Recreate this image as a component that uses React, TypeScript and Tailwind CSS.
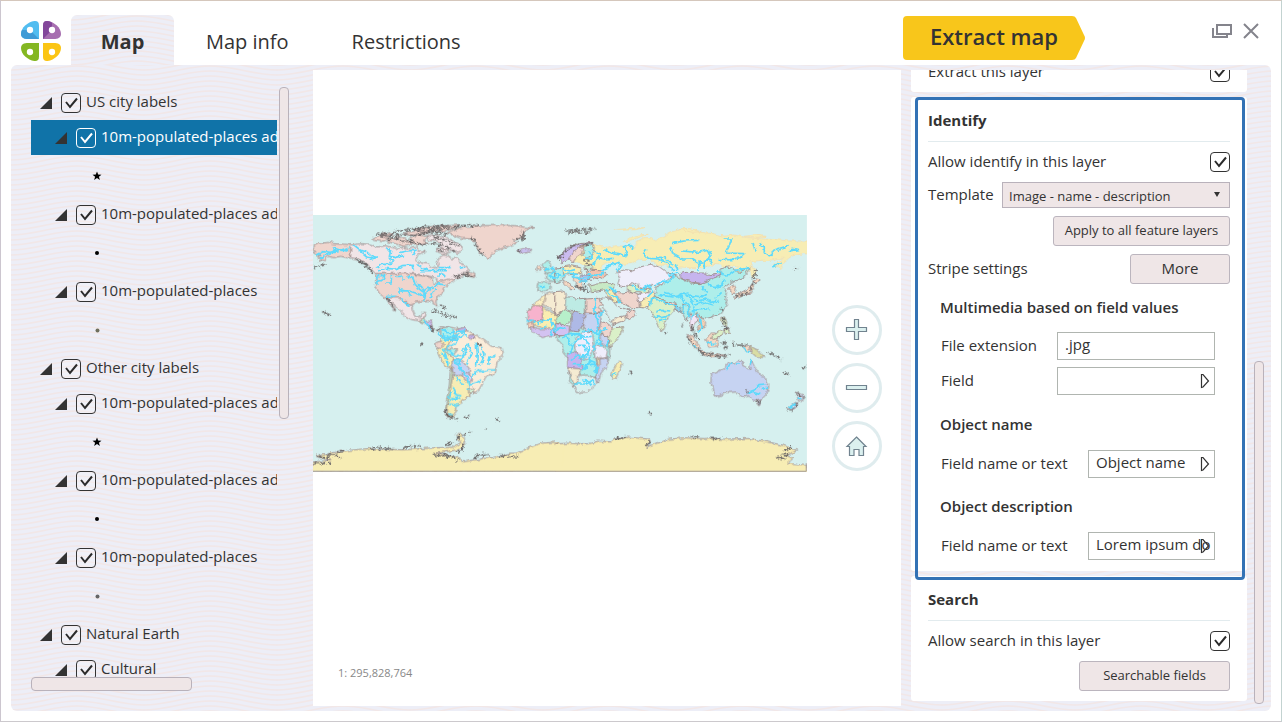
import React, { useState } from 'react';

type Shape = [fill: string, d: string];

interface TreeNode {
  id: string;
  label: string;
  level: 1 | 2;
  symbol?: 'star' | 'dot' | 'olive' | 'gray';
}

const nodes: TreeNode[] = [
  { id: 'us', label: 'US city labels', level: 1 },
  { id: 'us-adm0', label: '10m-populated-places adm0', level: 2, symbol: 'star' },
  { id: 'us-adm1', label: '10m-populated-places adm1', level: 2, symbol: 'dot' },
  { id: 'us-all', label: '10m-populated-places', level: 2, symbol: 'olive' },
  { id: 'other', label: 'Other city labels', level: 1 },
  { id: 'other-adm0', label: '10m-populated-places adm0', level: 2, symbol: 'star' },
  { id: 'other-adm1', label: '10m-populated-places adm1', level: 2, symbol: 'dot' },
  { id: 'other-all', label: '10m-populated-places', level: 2, symbol: 'gray' },
  { id: 'earth', label: 'Natural Earth', level: 1 },
  { id: 'cultural', label: 'Cultural', level: 2 },
];

// Map shapes are stored in quadrants: NW, NE, SW, SE
const northWest: Shape[] = [
  ['#efd5cd', 'M9 122l14-6 30-4 18 4 51 3v41l-30-6-22 4-14-4-10 8-18 10 8-12-14-4 8-6-14-2-7-6 12-4-10-4z'],
  ['#f1e5e7', 'M122 120l34-4 24 2 22 8 26-4 30 8 24-2 20 4 16-6 10 10 18 4-22 8-6 16 10 10 22 2 18 10 12 6 6-8-4-12 6-14 12-8 18 4 10 8 14-4 8 14 22 14 8 14-28 4 10 6-14 10-22 4-18 8-24 4-5-19-65-11H197l-20-20-12-14-20-10-23-4z'],
  ['#efd5cd', 'M197 206h103l65 12 5 19 24-9 30-8 12 2-14 12-18 14-6 16-16 10-4 14 3 18-8-6-6-14-28 2-26 4-6 13-14-12-20-10h-40l-24-16-12-22z'],
  ['#f1e5e7', 'M229 279h38l18 12 21 13 1 14 8 17h16l6-12 13-1-4 12-12 6-1 8-28-4-24-14-14-18-20-18 10 22-8-6z'],
  ['#c6efcf', 'M331 339l12 1-1 14-11-3z'],
  ['#cbbcf0', 'M343 350l20-2 4 18 4 12-10-8-14-16z'],
  ['#efd5cd', 'M411 84l26-12 30-8 46-2 60-1 44 1 28 5 30 1-30 8-6 20-28 10 10 8-26 10-18 6-18 8-12 8-8 14-20-8-16-20-4-16-12-14-34-2z'],
  ['#efd5cd', 'M190 98l28-6 22 8-24 10-26-4zM212 88l30-4 10 6-22 4zM236 100l44-4 10 8 22 14-30 6-28-8-20-6zM300 98l24-8 28 4-12 12 14 10-30 4-20-8zM282 84l50-8 34 6-30 6-40 2zM318 72l56-8 76-4-28 14-46 6-40-2z'],
  ['#f1e5e7', 'M350 92l30-4 34 12 26 12 18 14-12 20-18-10-24-2-16-8 8-14-40-6zM380 130l26 2 14 8-18 8-20-8z'],
  ['#efd5cd', 'M462 206l20-3 14 6-2 8-18-3z'],
  ['#c9c0ef', 'M620 136l20-5 22 3-6 9-22 3z'],
  ['#f5d9c4', 'M678 186l8-6 8 5-4 9-10 2z'],
  ['#aeeeea', 'M700 178l12-12 8 8 6 20 12 10-34 2 8-12-12-6z'],
  ['#aeeeea', 'M683 232l36 0 2 20-20 8-20-4zM710 206l30-6 10-8v34l-26 4-14-10z'],
  ['#f5ebd2', 'M710 268l14-6 26-2v74l-48-34-20 2 6-16z'],
  ['#faeec0', 'M709 266l-20 18-24 18-14 22 16 0 16-18 18-12z'],
  ['#f7b3cd', 'M652 322l18-20h28v46h-30l-16-4z'],
  ['#faeeb0', 'M698 306l52 32v20l-20 14-20 6-12-14-28-4 0-12h28z'],
  ['#d3c2f1', 'M658 370l24-2 16 10 18-10 20 6 14 4v14l-34 0-18 6-20-10z'],
  ['#f8cdb8', 'M652 352l16 2 4 14-16 2z'],
];

const northEast: Shape[] = [
  ['#f7edb4', 'M116 118l22 6 20 6 24-8 30 2 30 4 4-18 20-12 24 0 12 10 18-12 30-16 34-8 36 2 18 8 36 4 34 8 28-4 42 8 46 4 40 2 34 4h88v18l8 6 0 10-24 6-26-2-30 6-14 8-14 18-12 16-6-12 20-22-18 0-24 6-26 0-34 4 4 20-20 18-22 10-12 6 4-22 10-18-14-4-24 8-14-8-24-2-20 10-50 0-26-2-22 2-30-8-16 2-24-18-36-2-20 14-36 2-20-6-24 2-12 14 6 22-24-8-30-22-24-6-12-14-8-16 4-18z'],
  ['#f7edb4', 'M208 110l20-14 24-6 28-2-24 8-30 12zM370 72l30-2 42 10-30 2zM568 94l30-4 36 4-26 6zM178 74l60-4 30-2-26 6-50 2zM586 182l12 6 4 22-10 8-4-18zM652 182l22-14 8 4-20 14z'],
  ['#efeefb', 'M186 202l24-8 24 4 22-12 30-8 28 8 24 18 22 4-10 16-16 8-10 8-30-2-22 10-18-2-8-14-20 6-14 8-24-6 6-20z'],
  ['#c6b4ee', 'M370 206l26-4 26 2 30 0 14 8 32-6-4 10-26 10-22 10-34-4-30-10z'],
  ['#aeeeea', 'M304 246l20-8 16-18 20-10 16 10 28 14 32 2 24-10 34-12 2-22 22-6 18 4 14 12 38-16-24 32-34 14-24 16 10 10-4 22 6 20-22 26-24 10-16 4-22-6-24 4-14-10-28-10-30-8-28-18-10-20z'],
  ['#daf0c8', 'M216 240l30 2 18 8 24 0-14 14-22-4-18 2-20-8z'],
  ['#efd5cd', 'M178 262l24 2 28-4 18 6 4 22 2 20-20 0-26-10-22-18z'],
  ['#efeefb', 'M246 270l30-10 18 2-10 14-20 14-16-4z'],
  ['#f7edb4', 'M254 290l22-12 14-16 10 8-10 22-8 16-26-4z'],
  ['#daf0c8', 'M278 310l18-34 18 2 24 14 20 6 4 14-14 14-14 22-8 20-6 12-8-10-12-30-10-18z'],
  ['#efd5cd', 'M328 290l24 0 14 8-14 2-22-4z'],
  ['#8fd6f2', 'M362 306l12-2 4 14-12 4z'],
  ['#aeeeea', 'M386 296l14 10 6 18-12 22-10-18z'],
  ['#f1e5f5', 'M406 328l14 0 12 16-14 12-8 20-6-14z'],
  ['#f3d0b4', 'M424 324l18 14 10 18-8 18-14-2 8-14-12-20z'],
  ['#c8e9c5', 'M102 240l26-6 32-2 18 6-4 14-34 4-30 4z'],
  ['#f3c3ae', 'M94 200l24-4 28 2 10 12-20 12-22-4-22-6z'],
  ['#c9e9d2', 'M90 178l22 0 6 14-26 2z'],
  ['#aeeeea', 'M84 128l20-12 14 10-4 22-18 12-16-8 8-12z'],
  ['#efd5cd', 'M40 148l24-16 22-8-6 22-20 14-8 14-10-10z'],
  ['#cbbcf0', 'M8 152l16-8 20-20 30-8 40-4-36 12-26 22-12 16-20 12z'],
  ['#f7edb4', 'M22 186l26-4 34 8-6 16-40 4-14-10z'],
  ['#aeeeea', 'M0 192l24-2 4 24-12 16-16 4z'],
  ['#b3c2ea', 'M76 210l28 0 4 16-26 4z'],
  ['#f5d9c4', 'M24 226l16 8 20 20-14 0-16-16zM54 216l20 4 10 18-6 18-12-14z'],
  ['#f5ebd2', 'M0 260l24-2 10 4 0 28-6 30-28 12z'],
  ['#bdebe4', 'M32 276l18 0 12 6 30-2v42l-10 6-52-18z'],
  ['#efd5cd', 'M92 282l38-2 10 18-6 6 6 20H92z'],
  ['#b7efca', 'M4 334l26-18 22 6-4 24-20 16-24-8z'],
  ['#aeb9e6', 'M54 316l36 12-4 28-14 22-28-4 4-22z'],
  ['#d3c2f1', 'M0 356l20 2 24 6-2 24-18 4-24 0z'],
  ['#c6d3f2', 'M90 326l50 0-4 40-12 16-34-6-4-14z'],
  ['#efd5cd', 'M138 350l18 4 20 16 16 6-22 20-26-2-12-20z'],
  ['#daf0c8', 'M176 368l30-2-12 26-30 36-4-30z'],
  ['#d8f0ef', 'M134 284l14-6 22 6 16 20 26 8 28 6-12 18-38 8-16 18-14-24z'],
  ['#f5ebd2', 'M170 350l18-14 28-4-8 16-34 10z'],
  ['#efd5cd', 'M212 336l6-16 20-4 4 10-18 18z'],
  ['#faeeb0', 'M150 256l22-2 14 20 10 16-12 4-24-18z'],
  ['#f5d9c4', 'M524 244l10-6 10 24-12 4-8-12zM540 272l16-8 22-12 14-16 6 6-14 26-22 2-20 10zM592 232l14-10 10 6-14 8z'],
  ['#daf0c8', 'M498 340l10-2 8 14-2 14-12-10zM506 372l14-2 4 14-12 4zM466 400l30-24 12-2-8 18-26 12z'],
];

const southWest: Shape[] = [
  ['#faedda', 'M396-42l50 8 30 8 20 10 26 16 20 18 34 6 4 16-18 22-6 36-28 12-20 38-18 14-24-18 6-24-20-18-28-42-26-6-8-22 8-50z'],
  ['#f7edb4', 'M396-34l34 6 10 20-20 12-10 22 14 16 6 20-2 26-24-12-16-26-8-20 12-14z'],
  ['#aeeeea', 'M394-36l24-4 12 12 14 14-22 14-18-4-12-14zM404 30l20-6 20 4-14 20-14-4z'],
  ['#efd5cd', 'M378 8l14-4 12 10-14 14-12-8z'],
  ['#c6d3f2', 'M426 60l22-2 24 20 12 22-22 12-22-2-12-16z'],
  ['#dcd1f5', 'M458 96l20 4 10 22-16 6-14-14z'],
  ['#f7edb4', 'M428 108l26-2 22 22 4 40-24 12-2 10-18 12 4 14-12 18-14-2-4-34 6-40z'],
  ['#c8e9c5', 'M422 84l6 14-6 52-8 40-4 36 4 10-8-10 4-46 8-44z'],
  ['#d5edd0', 'M474 144l20 2-2 12-16 2z'],
  ['#c6b4ee', 'M477-14l16-2 2 12-16 2zM442-32l22-6 4 12-18 4z'],
  ['#f7edb4', 'M9 366l54-4-44-12 30-8 60-10 70-6 100 4 90-6 60-2 24-14-14-20 10-10 14 16 0 22-20 14-66 10 66 10 14 16 80-12 30-4 30-10 22 0 30-14 46-16 50-4v85H9z'],
];

const southEast: Shape[] = [
  ['#c6d3f2', 'M470 104l20-10 20-10 10-16 16 4 12-10 16 0-2 14 22 12 6-28 10 20 10 20 20 14 12 22-6 26-14 14-26 6-14-14-20 4-16-16-32 2-22 10-14 0-2-20-8-20z'],
  ['#c6d3f2', 'M606 180l12 0 0 10-8 6z'],
  ['#d5e0f5', 'M724 156l10 8 14 4-4 14-14-2zM698 208l20-18 10-6 0 12-18 14z'],
  ['#f7edb4', 'M196 60l4 14-10 26-8 16-12-2 2-18 12-24z'],
  ['#aeeeea', 'M0-24l44-6 60-8 58 4 4 20-2 34 0 40-40 20 2 24-28 34-36 4-18-14-4-70-16-20 2-20-20-22z'],
  ['#efeefb', 'M60-2l30-26 22 4 6 40-16 40-24-2-18-24z'],
  ['#c6b4ee', 'M38 40l30-4 10 20 6 32-46-4z'],
  ['#f5ebd2', 'M38 84l32 2 6 6-8 40-12 0z'],
  ['#d8f0ef', 'M68 106l28 0 26 8 4 16-28 26-34 2-8-26 12 0z'],
  ['#efeefb', 'M118 22l20-8 20 16-4 24-34 2z'],
  ['#c6d3f2', 'M124 60l36-8-4 26-18 22-8 30-8-18 10-26zM134-16l28 2-2 34-22-10z'],
  ['#f0e0b6', 'M126 52l8-2 2 26-8-4z'],
  ['#f5d9c4', 'M396-14l20 8 22 32-8 4-22-26zM436 34l40 8 40 4-40 4-36-6zM452-4l22-18 18 6-6 34-24 4zM564 16l18 2 4 20-14-8z'],
  ['#d9dda4', 'M584 18l24 12 22 22-24 0-16-14z'],
  ['#f7edb4', 'M0 312l40-2 60 2 30-8 36 2 10-8 46-6 62 6-8 26 24-12 40-14 50-4 60 2 14-2 40 4 76-2 60 10 50 12 38 14-34 14 20 10-16 14 70 10 8 26H0z'],
];

const rivers: [x: number, y: number, d: string][] = [
  [0, 0, 'M18 152l20-12 24 2 20-8 28 4 10-10M30 158l30-14 26-4M68 128l24 8 20-8M132 120l20 16 20 4 24 22-18 4M146 136l24 20 26 4 10-8M228 128l14 10-4 16 18 4 26-6M270 142l20-4 28-2-10 14M198 190l16-12 26 0 8-12-12-8M204 198l20-8 32 2 20-10 30-2 4 16M320 178l30 18 26 2M330 197h78M386 188l36 0M446 190l20-4M196 232l20-6 8-14-20 0-8 10M204 212v24M244 210v24h-16M254 214l20 0 10 10M290 210l20 12 6 18 18 4 8 14 0 30M268 270l-2-20 24 6 12 16M268 258l30 0 30 10 16 12M320 246l18 14 14-10 20 0 10-14 24 4M344 286l2-20 20-20M360 280l6-16 16-10M384 214l8-8 14 6M230 274l30 0M274 280l10 14 14 8M338 344l20 20 6 12M396 374l20 10 34-6 10 12-20 14-34 2-6-22M430 370l4 30M706 196l20-10 10 12-16 14M716 212l24 8 10-8M686 244l20 2M650 346l20 0 14 10 20-12 18 2 10 18 4 20M690 374l18-10M720 390l12-18'],
  [735, 0, 'M116 136l20 12-14 16-6 16M148 134l14 8 30 4 20 10 4-10-8-22 22-2 4 8M140 200l16-14 22-8 14-6 6 10-12 18M132 158l20 4 24-2M276 130l-10 16 14 14 32 2 26 14 12 18 10 4M346 122l8 26 26 14 30 0 22 14 0 20M300 156l30 2 14 14 18 8 4 16M380 138l50 4 30-6 8 16-20 16 0 24M352 116l36-8 46-2M506 102l24 0-8 22-10 20 54 2-10 12-26 6-40 0M432 172l34-6 6 10M594 114l6 26M614 112l14 14 0 20 16 6 18-18 40-12M652 186l28-12M704 138l24-4-14-4-10 8M90 160l22 0-8-18M20 190l24 8 16-4M0 206l22 6 20-8 24 4M96 206l30 6 22-8M50 214l24 6 34-4-10 12-30 0M150 250l16 20 18 8 12 16M160 246l26 16M234 240l14 14 24 0M264 250l18-10 10 20-14 16M302 240l22-12 16 2 18-18M370 204l-30 8M310 268l40 8 30-4 10 20M330 262l34 14 20-12 30 10M286 306l4-28 24 8 30 12 24 8M304 320l22-4 20 2M300 334l20 4 24-6M312 350l22-8M380 280l20 20 2 40M392 270l22 20 4 30-10 20M400 266l26 22 28-6 16 10 20-4M420 300l26-8 30 8M410 320l30-10 24 4M440 244l20 20-16 12-32-4M456 232l20 16 24-6 8-20M486 196l20 14 20-2 16-12 42-8M500 262l-20 20M426 330l10 10 6 30-14 12M390 300l-6 24M120 280l4 16 -8 20 10 20 4 24-8 30M148 316l-14 20M154 370l-20 10-10 34M84 380l26-6 20 16M50 392l20-6 20 10 20-2M0 376l14-8 20 4'],
  [0, 405, 'M384-20l20 20 18-10 22 4-8 18-26 8M400-12l30 6 30-22 10 18M410 26l24 20 30 0-6-16 14-14M392 38l20 20 2 20M400 26l10 26M466 20l4 22-24 20-16-2M472 12l14 26-16 34M498 8l4 30-2 40M510 40l10 16-12 22M514 20l8 20-6 30M558 46l-18 4-4 24M556 90l-20 0-14 4-26 0-14 24M430 60l20 20 20 30M444 58l6 34 12 0M438 110l10 16 14 6M470 104l6 32 24-8 14-8M482 148l-12-4M430 142l8 22 16 4M412 170l40 8M416 184l28-14M418 192l28 4M424 152l-4 14M416 222l12 2'],
  [735, 405, 'M22-6l20-14 24 2 14 8-16 12M64 0l20-6 20 20-8 30-24 10M70 16l20 0 6 22M48 62l20-18 16 10 14-8M52 74l20 0 24 4 10-12-4-22M80 90l16-12 18-6 12 6-6 18M96 84l6-24 20 8M58 132l36 0 16-10 8 12M84 120l14 4 12 14M114 30l10-20 14 4-6-20M130 80l-6 24M156 2l4 18M36-12l8 24 10 8-10 24M54 12l16-16M170 104l14-2M514 90l10-16 8-2M540 72l12 0M590 60l-4 14M632 132l-20 2-14 16-16 6M636 142l-20 4M616 164l-20-6-16 0M704 202l20-12M728 170l14 8M416 12l10 12M456 12l12-6 10 6M566 20l16 18'],
];

// Broken, rocky coastlines and small islands
const coasts: [x: number, y: number, d: string][] = [
  [0, 0, 'M196 90l26-6 20 4 18-10 36-4 30-6 40-4 50-2M210 92l40 2 40-6 30 4 40-14 40-4M230 104l30-4 20 8 30 2M310 74l50-2 40-4 44 2M330 84l60-2 20 6M370 96l40 10 20 10 24 8M360 116l40 4 20 12 16 8M300 106l20 10 30 2M384 132l24 12M430 66l44-6 30 2M482 98l10 6 6 18 8 4 6 20 10 2M640 78l-6 20-14 8M644 84l-6 24M142 162l10 12 14 2 10 14 16 16M150 168l22 18M9 188l40-10M228 276l18 22 8 18M362 320l16-2 14 8 20 2M402 336l26-2 10 4M430 214l20 0 14-8 14 0M464 210l30 4M360 362l10 14 20 0M390 300l16 10M40 322l12 4 10 6M742 154l8 8M620 136l14 4'],
  [735, 0, 'M32 78l20-4 20 2 20-4 30 0M40 84l34-4 30 2M8 156l16-8 10-14 20-12 30-4 30 0M12 162l10-6M88 236l8 20M74 248l30 14M500 310l2 10M504 338l6 20 8 18M506 370l14 0M408 360l8 22 18 22M544 274l30-8 14-16 10-22M590 222l10-12 4-20M382 358l2 12M326 380l8 6M718 190l10 2M62 240l14 10M86 164l16 0M92 174l10 4'],
  [0, 405, 'M406 206l4 14 16 14 16 4M404 212l8 16 20 8M410 220l20 16M462 232l16-2M556 236l14 8M524 268l4 0M500 12l16 4M330 12l8 2M24 348l20 6 14-2M50 344l30 2 14 6M10 370l50 0M80 336l22-2M176 328l26-4 50 4M282 322l20-4 30 0M368 344l30 4M400 346l30 6 16 8M436 300l16-12 30-10M406 316l24-8M460 310l-4 20-14 8M566 348l60 2M490 352l22-8 24 0'],
  [735, 405, 'M396-10l22 28 20 16M436 38l30 6 40 6 20-6M500 14l10-8 4 16-10 4M532 6l4 12M546 16l30 0M640 38l20 8 20 12M686 98l16 8M744 84l10-4M222 98l10 0M280 218l10 4M724 156l10 10 14 6M698 208l14 2 16-24M606 180l10 14M574 152l8 8M664 352l30 6M680 344l26 0M690 330l20-8M272 318l14-14M180 296l40-2M470 296l30 0M410 290l20 2'],
];

function Waves() {
  return (
    <svg className="absolute inset-0 h-full w-full" aria-hidden="true">
      <defs>
        <pattern id="waves" width="133" height="5" patternUnits="userSpaceOnUse">
          <rect width="133" height="5" fill="#edeef7" />
          {[-10, -5, 0, 5, 10].map(y => (
            <path
              key={y}
              d={`M0 ${y + 5}C24 ${y + 5} 42 ${y - 4} 66 ${y - 4}S109 ${y + 5} 133 ${y + 5}`}
              fill="none"
              stroke="#f2e7e7"
              strokeWidth="1.500"
            />
          ))}
        </pattern>
      </defs>
      <rect width="100%" height="100%" fill="url(#waves)" />
    </svg>
  );
}

function Logo() {
  const petal = 'M117 117V76C117 66 112 62 103 63C83 66 63 83 63 102C63 113 72 117 85 117z';
  return (
    <svg viewBox="60 60 126 126" className="h-[42px] w-[42px]" aria-hidden="true">
      <path d={petal} fill="#52bdf0" />
      <path d="M117 117H85C72 117 63 113 63 102q0-7 3-12h24z" fill="#3f9bd6" />
      <g transform="matrix(-1 0 0 1 246 0)">
        <path d={petal} fill="#a76fb0" />
        <path d="M117 117V76C117 66 112 62 103 63q-7 1-13 5v22z" fill="#83479a" />
      </g>
      <path d={petal} fill="#84b722" transform="matrix(1 0 0 -1 0 246)" />
      <path d={petal} fill="#fbc514" transform="rotate(180 123 123)" />
      <g fill="#fff">
        <circle cx="90" cy="90" r="9.500" />
        <circle cx="156" cy="90" r="9.500" />
        <circle cx="90" cy="156" r="9.500" />
        <circle cx="156" cy="156" r="9.500" />
      </g>
    </svg>
  );
}

function WorldMap() {
  const quadrants: [number, number, Shape[]][] = [
    [0, 405, southWest],
    [735, 405, southEast],
    [0, 0, northWest],
    [735, 0, northEast],
  ];

  return (
    <svg viewBox="9 30 1482 771" className="block w-full" role="img" aria-label="World map">
      <defs>
        <filter id="ragged" x="0" y="0" width="1500" height="810" filterUnits="userSpaceOnUse">
          <feTurbulence type="fractalNoise" baseFrequency="0.07" numOctaves="3" seed="4" />
          <feDisplacementMap in="SourceGraphic" scale="14" xChannelSelector="R" yChannelSelector="G" />
        </filter>
        <filter id="rocky" x="0" y="0" width="1500" height="810" filterUnits="userSpaceOnUse">
          <feTurbulence type="fractalNoise" baseFrequency="0.12" numOctaves="3" seed="9" />
          <feDisplacementMap in="SourceGraphic" scale="18" xChannelSelector="R" yChannelSelector="G" />
        </filter>
      </defs>
      <rect x="9" y="30" width="1482" height="771" fill="#d6f0ef" />
      <g filter="url(#ragged)">
        {quadrants.map(([x, y, shapes]) => (
          <g key={`${x}-${y}`} transform={`translate(${x} ${y})`} stroke="#988383" strokeWidth="2.500" strokeLinejoin="round">
            {shapes.map(([fill, d], i) => (
              <path key={i} d={d} fill={fill} stroke={y === 0 && x > 0 && i < 2 ? '#f3dfae' : undefined} />
            ))}
          </g>
        ))}
        <path d="M726 722h34v76h-34z" fill="#f7edb4" />
      </g>
      <path d="M9 782h1479v17H9z" fill="#f7edb4" />
      <g filter="url(#rocky)" fill="none" stroke="#696565" strokeWidth="5" strokeDasharray="22 4 12 6">
        {coasts.map(([x, y, d]) => <path key={d} d={d} transform={`translate(${x} ${y})`} />)}
      </g>
      <g filter="url(#ragged)" fill="none" stroke="#5cdafc" strokeWidth="5" strokeLinejoin="round">
        {rivers.map(([x, y, d]) => <path key={d} d={d} transform={`translate(${x} ${y})`} />)}
      </g>
      <path d="M9 799h1480v-24" fill="none" stroke="#a39a97" strokeWidth="3" />
    </svg>
  );
}

function Checkbox({ id, light }: { id: string, light?: boolean }) {
  return (
    <span className="relative block h-5 w-5 shrink-0">
      <input
        id={id}
        type="checkbox"
        defaultChecked
        className={`peer block h-5 w-5 appearance-none rounded border ${light ? 'border-white' : 'border-[#333] bg-white/20'}`}
      />
      <svg viewBox="0 0 20 20" className="pointer-events-none absolute inset-0 hidden h-5 w-5 peer-checked:block" aria-hidden="true">
        <path d="M5 9l4 5L16 5.500" fill="none" stroke={light ? '#fff' : '#2b2b2b'} strokeWidth="2" />
      </svg>
    </span>
  );
}

function SymbolRow({ symbol }: { symbol: NonNullable<TreeNode['symbol']> }) {
  return (
    <div className="flex h-[42px] items-center pl-[61px]">
      <svg viewBox="0 0 10 10" className="h-2.5 w-2.5" aria-hidden="true">
        {symbol === 'star' && <path d="M5 .5l1.200 3.100 3.300.1-2.600 2 1 3.300L5 7.100 2.100 9l1-3.300-2.600-2 3.300-.1z" fill="#000" />}
        {symbol === 'dot' && <circle cx="5" cy="5" r="2" fill="#000" />}
        {symbol === 'olive' && <circle cx="5.500" cy="5.500" r="2" fill="#6f6f5c" />}
        {symbol === 'gray' && <circle cx="5.500" cy="5.500" r="2" fill="#666" />}
      </svg>
    </div>
  );
}

function LayerTree() {
  const [selected, setSelected] = useState('us-adm0');

  return (
    <aside className="relative flex w-[302px] shrink-0 flex-col py-5 pl-5">
      <div className="flex min-h-0 flex-1 gap-0.5">
        <div className="w-[246px] overflow-hidden">
          {nodes.map(node => {
            const active = node.id === selected;
            return (
              <div key={node.id}>
                <div
                  onClick={() => setSelected(node.id)}
                  className={`flex h-[35px] items-center ${node.level === 2 ? 'pl-6' : 'pl-[9px]'} ${active ? 'bg-[#1073a8] text-white' : ''}`}
                >
                  <button aria-label={`Collapse ${node.label}`} className="mr-[9px] shrink-0">
                    <svg viewBox="0 0 12 12" className="h-3 w-3" aria-hidden="true"><path d="M12 0v12H0z" fill="#333" /></svg>
                  </button>
                  <Checkbox id={node.id} light={active} />
                  <label htmlFor={node.id} className="pb-1 pl-[5px] whitespace-nowrap">{node.label}</label>
                </div>
                {node.symbol && <SymbolRow symbol={node.symbol} />}
              </div>
            );
          })}
        </div>
        <div className="mt-0.5 h-[56%] w-2.5 rounded-sm border border-[#b9b2bb] bg-[#efe6e7]" />
      </div>
      <div className="h-3.5 w-[161px] rounded-sm border border-[#b9b2bb] bg-[#efe6e7]" />
    </aside>
  );
}

function MapButton({ label, children }: { label: string, children: React.ReactNode }) {
  return (
    <button aria-label={label} className="flex h-[50px] w-[50px] items-center justify-center rounded-full border-3 border-[#dfecee] bg-white">
      <svg viewBox="0 0 24 24" className="h-6 w-6" fill="#dbf0ef" stroke="#71838f" strokeWidth="1.200" aria-hidden="true">{children}</svg>
    </button>
  );
}

function MapView() {
  return (
    <main className="relative my-[5px] flex min-w-0 flex-1 flex-col bg-white pt-[145px]">
      <div className="w-[84%]">
        <WorldMap />
      </div>
      <p className="mt-auto pb-[23px] pl-[25px] text-[11px] leading-5 text-[#888]">1: 295,828,764</p>
      <div className="absolute top-1/2 right-[19px] flex -translate-y-1/2 flex-col gap-2">
        <MapButton label="Zoom in"><path d="M9.500 1.500h4v8h8v4h-8v8h-4v-8h-8v-4h8z" /></MapButton>
        <MapButton label="Zoom out"><path d="M1.500 9.500h20v4h-20z" /></MapButton>
        <MapButton label="Home"><path d="M11.500 3l9.500 9.500h-2.500v9h-4.500v-6h-5v6H4.500v-9H2z" /></MapButton>
      </div>
    </main>
  );
}

function PanelTitle({ children }: { children: React.ReactNode }) {
  return <h2 className="flex h-[45px] items-center border-b border-[#e2ebee] pt-0.5 font-bold">{children}</h2>;
}

function CheckRow({ id, label }: { id: string, label: string }) {
  return (
    <div className="flex h-10 items-center justify-between">
      <label htmlFor={id} className="pb-0.5">{label}</label>
      <Checkbox id={id} />
    </div>
  );
}

function FieldRow({ id, label, value, picker, wide }: { id: string, label: string, value: string, picker?: boolean, wide?: boolean }) {
  return (
    <div className="flex h-7 items-center justify-between pr-[15px] pl-[13px]">
      <label htmlFor={id} className="pb-0.5 whitespace-nowrap">{label}</label>
      <div className={`relative h-7 ${wide ? 'w-[158px]' : 'w-[127px]'}`}>
        <input id={id} defaultValue={value} className="block h-7 w-full border border-[#b0b5b0] bg-white pr-[3px] pb-1 pl-[7px]" />
        {picker && (
          <button aria-label={`Choose ${label}`} className="absolute top-1.5 right-[5px]">
            <svg viewBox="0 0 10 16" className="block h-4 w-2.5" aria-hidden="true">
              <path d="M1.500 1.500v13l1.500-.5 5.500-6L3 1.500z" fill="none" stroke="#333" strokeWidth="1.200" />
            </svg>
          </button>
        )}
      </div>
    </div>
  );
}

const buttonStyle = 'h-[30px] rounded-[3px] border border-[#bbb5be] bg-[#efe6e7] pb-0.5';

function Settings() {
  return (
    <div className="relative my-[5px] flex w-[370px] shrink-0 overflow-hidden pr-[7px] pl-2.5">
      <div className="flex w-[336px] flex-col justify-end gap-[5px] pb-[5px]">
        <section className="rounded-[3px] bg-white px-[17px]">
          <CheckRow id="extract" label="Extract this layer" />
        </section>

        <section className="relative rounded-[3px] bg-white px-[17px] pb-[11px]">
          <div className="pointer-events-none absolute top-0 right-0.5 -bottom-[9px] left-1 z-10 rounded border-3 border-[#3372b5]" />
          <PanelTitle>Identify</PanelTitle>
          <CheckRow id="identify" label="Allow identify in this layer" />
          <div className="flex h-[26px] items-center justify-between">
            <label htmlFor="template" className="pb-0.5">Template</label>
            <div className="relative">
              <select id="template" className="block h-[26px] w-[228px] appearance-none border border-[#b9b2bb] bg-[#efe6e7] pt-0.5 pl-1.5 text-[13px]">
                <option>Image - name - description</option>
              </select>
              <svg viewBox="0 0 6 5" className="pointer-events-none absolute top-2.5 right-2.5 h-[5px] w-1.5" aria-hidden="true">
                <path d="M0 0h6L3 5z" fill="#333" />
              </svg>
            </div>
          </div>
          <div className="mt-2 flex justify-end">
            <button className={`${buttonStyle} w-[177px] text-[13px]`}>Apply to all feature layers</button>
          </div>
          <div className="mt-2 flex items-center justify-between">
            <span className="pb-0.5">Stripe settings</span>
            <button className={`${buttonStyle} w-[100px]`}>More</button>
          </div>
          <h3 className="flex h-12 items-center pb-0.5 pl-3 font-semibold">Multimedia based on field values</h3>
          <FieldRow id="ext" label="File extension" value=".jpg" wide />
          <div className="mt-[7px]">
            <FieldRow id="field" label="Field" value="" picker wide />
          </div>
          <h3 className="flex h-[55px] items-center pt-0.5 pl-3 font-semibold">Object name</h3>
          <FieldRow id="name" label="Field name or text" value="Object name" picker />
          <h3 className="flex h-[54px] items-center pt-0.5 pl-3 font-semibold">Object description</h3>
          <FieldRow id="desc" label="Field name or text" value="Lorem ipsum dolor" picker />
        </section>

        <section className="rounded-[3px] bg-white px-[17px] pb-2.5">
          <PanelTitle>Search</PanelTitle>
          <CheckRow id="search" label="Allow search in this layer" />
          <div className="flex justify-end">
            <button className={`${buttonStyle} w-[151px] text-[13px]`}>Searchable fields</button>
          </div>
        </section>
      </div>
      <div className="mb-0.5 ml-auto h-[54%] w-2.5 self-end rounded-sm border border-[#b9b2bb] bg-[#efe6e7]" />
    </div>
  );
}

export default function App() {
  return (
    <div className="flex h-screen flex-col bg-white pb-[3px] font-['Open_Sans',sans-serif] text-[15px] leading-5 text-[#333]">
      <div className="flex min-h-0 flex-1 flex-col border border-t-[#d5c7bc] border-r-[#c3d3d1] border-b-[#ccc9cd] border-l-[#ccc6cf] px-2.5 pb-2.5">
        <header className="flex h-16 shrink-0">
          <div className="mt-[19px] ml-[9px] w-[51px]">
            <Logo />
          </div>
          <nav className="flex items-end text-xl">
            <a href="#map" className="relative flex h-[50px] w-[103px] items-center justify-center overflow-hidden rounded-t-md pt-1 font-bold">
              <Waves />
              <span className="relative">Map</span>
            </a>
            <a href="#info" className="flex h-[50px] items-center pt-1 pl-8">Map info</a>
            <a href="#restrictions" className="flex h-[50px] items-center pt-1 pl-[63px]">Restrictions</a>
          </nav>
          <button className="relative mt-[15px] mr-[126px] ml-auto h-11 w-[182px]">
            <svg viewBox="0 0 182 44" className="absolute inset-0 h-full w-full" aria-hidden="true">
              <path d="M4 0h165q3 0 4 2l8 17q2 3 0 6l-8 17q-1 2-4 2H4q-4 0-4-4V4q0-4 4-4z" fill="#f8c61b" />
            </svg>
            <span className="relative block pb-1 text-[22px] font-semibold">Extract map</span>
          </button>
          <div className="flex items-start gap-2.5 pt-[22px] pr-3">
            <button aria-label="Restore window">
              <svg viewBox="0 0 22 16" className="h-4 w-[22px]" fill="none" stroke="#84848c" strokeWidth="2" aria-hidden="true">
                <path d="M6 2h14v9H6zM2 5v9h14v-2" />
              </svg>
            </button>
            <button aria-label="Close">
              <svg viewBox="0 0 16 16" className="h-4 w-4" fill="none" stroke="#84848c" strokeWidth="2" aria-hidden="true">
                <path d="M1 1l14 14M15 1L1 15" />
              </svg>
            </button>
          </div>
        </header>

        <div className="relative flex min-h-0 flex-1 overflow-hidden rounded-md">
          <Waves />
          <LayerTree />
          <MapView />
          <Settings />
        </div>
      </div>
    </div>
  );
}
